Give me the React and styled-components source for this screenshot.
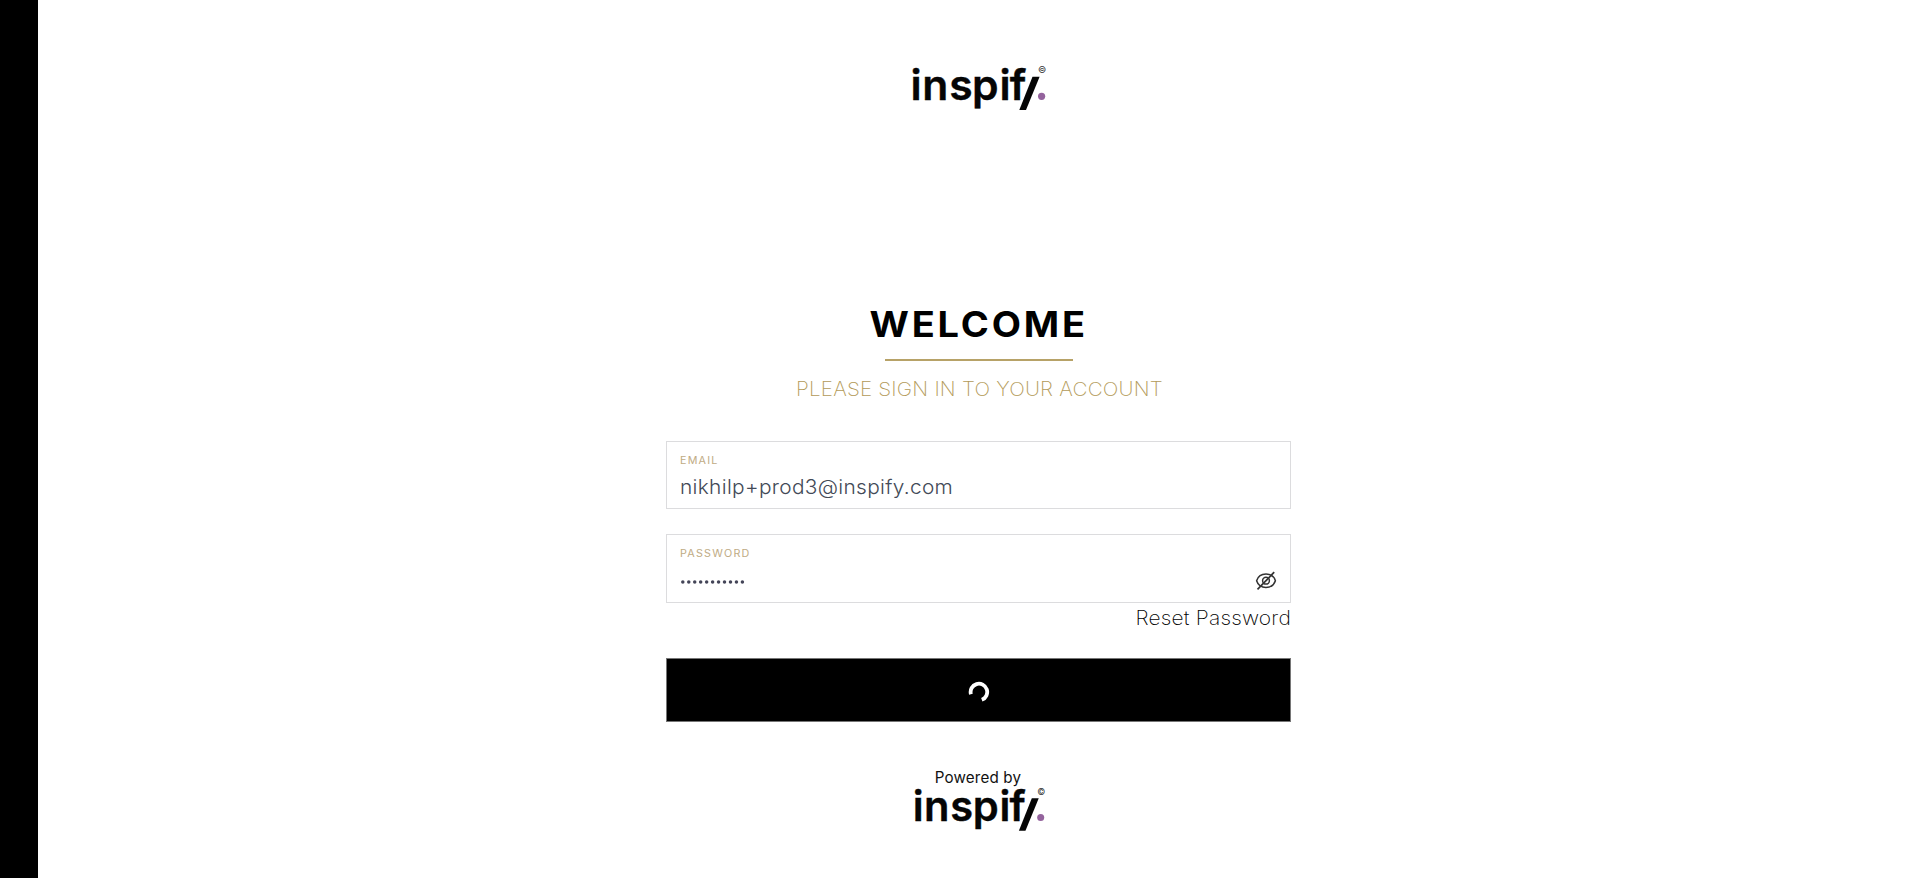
import React from "react";
import styled, { createGlobalStyle } from "styled-components";

const GlobalStyle = createGlobalStyle`
  *, *::before, *::after { box-sizing: border-box; }
  body { margin: 0; background: #fff; font-family: Inter, "Liberation Sans", sans-serif; }
`;

const Page = styled.div`
  display: flex;
  height: 878px;
  overflow: hidden;
`;

const Rail = styled.aside`
  flex: 0 0 38px;
  background: #000;
`;

const Main = styled.main`
  flex: 1;
  display: flex;
  flex-direction: column;
  align-items: center;
`;

const Header = styled.header`
  height: 304px;
  padding-top: 58px;
`;

const Title = styled.h1`
  margin: 0;
  height: 55px;
  line-height: 41px;
  font-size: 35px;
  font-weight: 700;
  letter-spacing: 2.6px;
  color: #000;
  white-space: nowrap;
  transform: scaleX(1.085);
`;

const Rule = styled.div`
  width: 188px;
  height: 2px;
  background: #b7a267;
`;

const Subtitle = styled.p`
  margin: 16px 0 0;
  height: 64px;
  line-height: 25px;
  font-size: 19.4px;
  font-weight: 200;
  letter-spacing: 0.2px;
  color: #b39a58;
  white-space: nowrap;
  transform: scaleX(1.064);
`;

const Form = styled.form`
  width: 625px;
  margin-right: 1px;
  display: flex;
  flex-direction: column;
`;

const Field = styled.label`
  display: flex;
  justify-content: space-between;
  height: ${(p) => p.$height}px;
  margin-bottom: ${(p) => p.$gap}px;
  padding: 12px 13px 0 13px;
  border: 1px solid #dcdcde;
`;

const FieldText = styled.span`
  display: flex;
  flex-direction: column;
`;

const Caption = styled.span`
  height: 20px;
  line-height: 14px;
  font-size: 9.7px;
  font-weight: 400;
  letter-spacing: 1.1px;
  color: #c0ab84;
  transform: scaleX(1.11);
  transform-origin: left;
`;

const Value = styled.span`
  line-height: 26px;
  font-size: 19.4px;
  font-weight: 300;
  letter-spacing: 0.3px;
  color: #434a57;
  transform: scaleX(1.075);
  transform-origin: left;
`;

const Dots = styled.svg`
  display: block;
  margin-top: 11.5px;
`;

const EyeButton = styled.span`
  padding-top: 23px;
  svg { display: block; }
`;

const Reset = styled.a`
  align-self: flex-end;
  height: 55px;
  line-height: 31px;
  font-size: 19.4px;
  font-weight: 200;
  letter-spacing: 0.2px;
  color: #000;
  transform: scaleX(1.08);
  transform-origin: right;
`;

const Submit = styled.button`
  display: flex;
  align-items: center;
  justify-content: center;
  height: 64px;
  padding: 3px 0 0 1px;
  border: 1px solid #767676;
  border-radius: 0;
  background: #000;
`;

const Footer = styled.footer`
  display: flex;
  flex-direction: column;
  align-items: center;
  padding-top: 46px;
`;

const Powered = styled.span`
  height: 12px;
  line-height: 20px;
  font-size: 15.2px;
  letter-spacing: 0.15px;
  color: #111;
  margin-right: 2px;
`;

const LogoSvg = styled.svg`
  display: block;
  overflow: visible;
`;

function Logo({ width }) {
  return (
    <LogoSvg width={width} height={(width * 56) / 136} viewBox="0 0 136 56">
      <text
        x="-0.4 11.3 38.2 61 88.4 98.8"
        y="41.5"
        fontSize="42.6"
        fontWeight="600"
        fontFamily="Inter, sans-serif"
        fill="#050505"
        stroke="#050505"
        strokeWidth="0.4"
      >
        inspif
      </text>
      <path d="M121.5 18.7H128.6L115 52H108.3Z" fill="#050505" />
      <circle cx="130.6" cy="38.3" r="3.6" fill="#94639d" />
      <text x="127" y="15" fontSize="9" fontFamily="Inter, sans-serif" fill="#333">
        ©
      </text>
    </LogoSvg>
  );
}

function EyeOff() {
  return (
    <svg width="22" height="22" viewBox="0 0 22 22" fill="none" stroke="#333" strokeWidth="1.5">
      <path d="M1.6 10.7C3 6.4 6.7 4 11 4S19 6.4 20.4 10.7C19 15 15.3 17.4 11 17.4S3 15 1.6 10.7Z" />
      <circle cx="11" cy="10.7" r="3.4" />
      <path d="M2.5 19.3L19.2 2.2" strokeWidth="1.7" />
    </svg>
  );
}

function Spinner() {
  return (
    <svg width="22" height="22" viewBox="0 0 22 22" fill="none" stroke="#fff" strokeWidth="3.8">
      <path d="M2.9 13.2A8.3 8.3 0 1 1 13.8 18.8" />
    </svg>
  );
}

export default function App() {
  return (
    <>
      <GlobalStyle />
      <Page>
        <Rail />
        <Main>
          <Header>
            <Logo width={136} />
          </Header>
          <Title>WELCOME</Title>
          <Rule />
          <Subtitle>PLEASE SIGN IN TO YOUR ACCOUNT</Subtitle>
          <Form>
            <Field $height={68} $gap={25}>
              <FieldText>
                <Caption>EMAIL</Caption>
                <Value>nikhilp+prod3@inspify.com</Value>
              </FieldText>
            </Field>
            <Field $height={69} $gap={0}>
              <FieldText>
                <Caption>PASSWORD</Caption>
                <Dots width="66" height="6" viewBox="0 0 66 6" fill="#434457">
                  {Array.from({ length: 11 }, (_, i) => (
                    <circle key={i} cx={2.8 + i * 5.96} cy="3" r="1.75" />
                  ))}
                </Dots>
              </FieldText>
              <EyeButton>
                <EyeOff />
              </EyeButton>
            </Field>
            <Reset>Reset Password</Reset>
            <Submit type="button" aria-label="Signing in">
              <Spinner />
            </Submit>
          </Form>
          <Footer>
            <Powered>Powered by</Powered>
            <Logo width={133} />
          </Footer>
        </Main>
      </Page>
    </>
  );
}
